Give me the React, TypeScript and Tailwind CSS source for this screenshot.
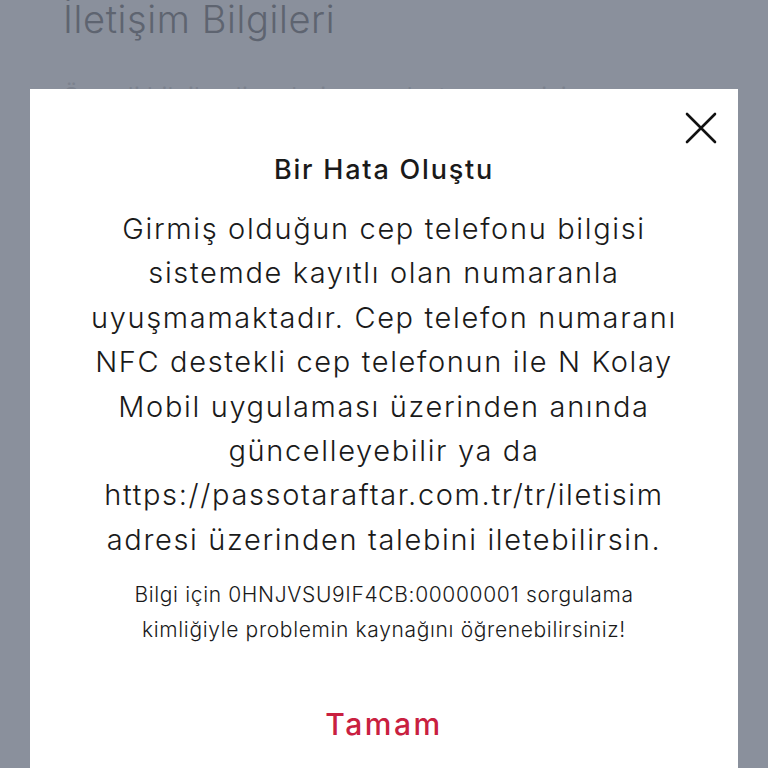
import React from "react";

const body = [
  "Girmiş olduğun cep telefonu bilgisi",
  "sistemde kayıtlı olan numaranla",
  "uyuşmamaktadır. Cep telefon numaranı",
  "NFC destekli cep telefonun ile N Kolay",
  "Mobil uygulaması üzerinden anında",
  "güncelleyebilir ya da",
  "https://passotaraftar.com.tr/tr/iletisim",
  "adresi üzerinden talebini iletebilirsin.",
];

export default function App() {
  return (
    <div className="relative h-[768px] w-[768px] overflow-hidden bg-[#8a909c]" style={{ fontFamily: "Inter, 'Noto Sans', sans-serif" }}>
      {/* page behind the overlay */}
      <div className="px-[63px] pt-[1px]">
        <h1 className="-mt-[6px] whitespace-nowrap text-[38px] font-light leading-[48px] tracking-[0.6px] text-[#5e6470]">İletişim Bilgileri</h1>
        <p className="mt-[38px] whitespace-nowrap text-[22px] leading-[28px] tracking-[0.8px] text-[#7c828e]">Önemli bilgilendirmeleri sana ulaştırmamız için</p>
      </div>

      {/* modal */}
      <div className="absolute inset-0 px-[30px] pt-[89px]">
        <div className="relative h-full bg-white pt-[63px] text-center text-[#1a1a1a]">
          <button className="absolute right-[20px] top-[22px] p-0">
            <svg width="34" height="34" viewBox="0 0 34 34" fill="none" stroke="#111" strokeWidth="2.6" strokeLinecap="round">
              <path d="M3 3 31 31M31 3 3 31" />
            </svg>
          </button>
          <h2 className="text-[27px] font-medium leading-[36px] tracking-[1.8px]">Bir Hata Oluştu</h2>
          <p className="mt-[19px] whitespace-nowrap text-[29px] font-light leading-[44.4px] tracking-[1.65px]">
            {body.map((l) => (
              <span key={l} className="block">{l}</span>
            ))}
          </p>
          <p className="mt-[15px] whitespace-nowrap text-[21px] font-light leading-[35px] tracking-[0.65px]">
            <span className="block">Bilgi için 0HNJVSU9IF4CB:00000001 sorgulama</span>
            <span className="block">kimliğiyle problemin kaynağını öğrenebilirsiniz!</span>
          </p>
          <button className="mt-[57px] text-[30px] font-medium leading-[40px] tracking-[2.5px] text-[#c9203f]">Tamam</button>
        </div>
      </div>
    </div>
  );
}
